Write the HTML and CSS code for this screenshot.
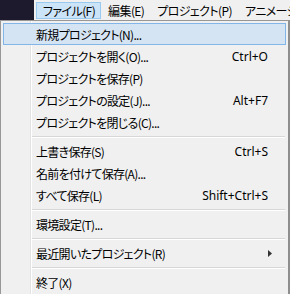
FILE: index.html
```html
<!DOCTYPE html>
<html lang="ja">
<head>
<meta charset="utf-8">
<link rel="stylesheet" href="styles.css">
</head>
<body>
<div class="topbar">
  <div class="dark"></div>
  <div class="menubar">
    <span class="mb-item active">ファイル(F)</span>
    <span class="mb-item">編集(E)</span>
    <span class="mb-item">プロジェクト(P)</span>
    <span class="mb-item">アニメーション(A)</span>
  </div>
</div>
<div class="menu">
  <div class="item hot"><span class="label">新規プロジェクト(N)...</span><span class="key"></span></div>
  <div class="item"><span class="label">プロジェクトを開く(O)...</span><span class="key">Ctrl+O</span></div>
  <div class="item"><span class="label">プロジェクトを保存(P)</span><span class="key"></span></div>
  <div class="item"><span class="label">プロジェクトの設定(J)...</span><span class="key">Alt+F7</span></div>
  <div class="item"><span class="label">プロジェクトを閉じる(C)...</span><span class="key"></span></div>
  <div class="sep"></div>
  <div class="item"><span class="label">上書き保存(S)</span><span class="key">Ctrl+S</span></div>
  <div class="item"><span class="label">名前を付けて保存(A)...</span><span class="key"></span></div>
  <div class="item"><span class="label">すべて保存(L)</span><span class="key">Shift+Ctrl+S</span></div>
  <div class="sep"></div>
  <div class="item"><span class="label">環境設定(T)...</span><span class="key"></span></div>
  <div class="sep"></div>
  <div class="item"><span class="label">最近開いたプロジェクト(R)</span><span class="key"><svg class="arrow" width="4" height="7" viewBox="0 0 4 7"><path d="M0 0L4 3.5L0 7Z" fill="#333"/></svg></span></div>
  <div class="sep"></div>
  <div class="item"><span class="label">終了(X)</span><span class="key"></span></div>
</div>
</body>
</html>
```

FILE: styles.css
```css
html, body {
  margin: 0;
  padding: 0;
}
body {
  width: 290px;
  height: 294px;
  overflow: hidden;
  background: #f0f0f0;
  font-family: "Noto Sans CJK JP", "Noto Sans", sans-serif;
  font-size: 12px;
  font-feature-settings: "palt";
  color: #000;
}
.topbar {
  display: flex;
  height: 20px;
}
.dark {
  width: 34px;
  flex: none;
  background: #1c1a2c;
}
.menubar {
  flex: 1;
  display: flex;
  align-items: stretch;
  background: #f0f0f0;
  padding: 2px 0 1px 2px;
  white-space: nowrap;
  overflow: hidden;
  letter-spacing: -0.6px;
}
.mb-item {
  display: flex;
  align-items: center;
  padding: 0 5px 0 6px;
  border: 1px solid transparent;
}
.mb-item.active {
  background: #cce4f7;
  border-color: #99c9ef;
}
.menu {
  border: 1px solid #979797;
  border-right: 2px solid #8e8e8e;
  padding: 2px 2px 2px 2px;
  height: 270px;
  background-color: #f0f0f0;
  background-image: linear-gradient(90deg, transparent 29px, #e2e2e2 29px, #e2e2e2 30px, #ffffff 30px, #ffffff 31px, transparent 31px);
}
.item {
  display: flex;
  align-items: center;
  height: 20px;
  border: 1px solid transparent;
  padding: 0 17px 0 32px;
  white-space: nowrap;
}
.item.hot {
  background: #d5e4f3;
  border-color: #82b6e8;
}
.label {
  flex: 1;
  letter-spacing: -0.7px;
}
.key {
  display: flex;
  align-items: center;
  font-family: "Noto Sans", sans-serif;
}
.arrow {
  margin-right: -7px;
}
.sep {
  height: 7px;
  margin-left: 29px;
  margin-right: 1px;
  background: linear-gradient(#f0f0f0 3px, #d7d7d7 3px, #d7d7d7 4px, #ffffff 4px, #ffffff 5px, #f0f0f0 5px);
}
```
